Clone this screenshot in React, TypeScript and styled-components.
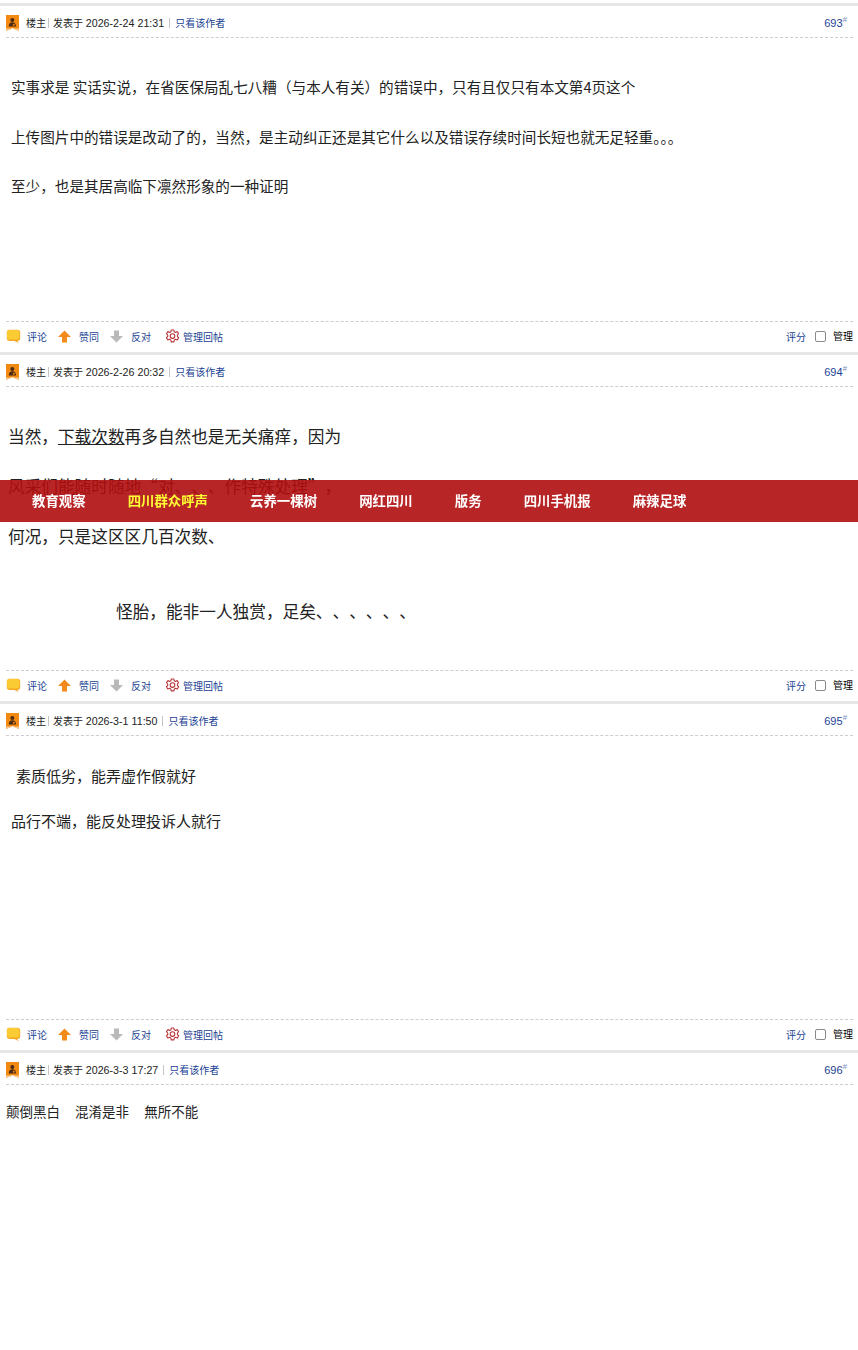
import React from "react";
import styled, { createGlobalStyle } from "styled-components";

const GlobalStyle = createGlobalStyle`
    html, body {
        margin: 0;
        padding: 0;
        background: #fff;
    }
    body {
        font-family: "Liberation Sans", "Noto Sans CJK SC", sans-serif;
        color: #222;
    }
`;

const Page = styled.div`
    padding-top: 3px;
    height: 1347px;
    overflow: hidden;
`;

const NavBar = styled.nav`
    position: fixed;
    top: 480px;
    left: 0;
    right: 0;
    height: 40px;
    padding: 0 0 2px 32px;
    display: flex;
    align-items: center;
    gap: 42.1px;
    background: rgba(176, 13, 14, 0.9);
`;

const NavItem = styled.a<{ $active?: boolean }>`
    font-size: 13.4px;
    font-weight: 700;
    color: ${(p) => (p.$active ? "#ffff33" : "#fff")};
    white-space: nowrap;
`;

const Post = styled.section`
    border-top: 3px solid #e6e6e6;
    padding: 0 5px 0 6px;
`;

const PostHead = styled.header`
    height: 29px;
    padding-top: 2px;
    display: flex;
    align-items: center;
    border-bottom: 1px dashed #cdcdcd;
    font-size: 10px;
    color: #222;
`;

const Avatar = styled.svg`
    width: 13px;
    height: 16px;
    margin: 1px 7px 0 0;
    flex: none;
`;

const Sep = styled.span<{ $left: number; $right: number }>`
    width: 1px;
    height: 10px;
    background: #c4c4c4;
    margin: 0 ${(p) => p.$right}px 0 ${(p) => p.$left}px;
`;

const Owner = styled.span`
    white-space: nowrap;
`;

const StampText = styled.span`
    white-space: nowrap;
`;

const StampDate = styled.span`
    font-size: 10.7px;
`;

const BlueLink = styled.a`
    color: #1b3f93;
    white-space: nowrap;
`;

const Floor = styled.a`
    margin-left: auto;
    margin-right: 6px;
    color: #1b3f93;
    font-size: 11px;
    white-space: nowrap;

    sup {
        font-size: 8px;
        line-height: 0;
        color: #7c8fbd;
        font-style: italic;
    }
`;

const Content = styled.div<{ $height: number; $top: number; $left: number }>`
    height: ${(p) => p.$height}px;
    box-sizing: border-box;
    padding: ${(p) => p.$top}px 0 0 ${(p) => p.$left}px;
    overflow: hidden;
`;

const Para = styled.p<{ $size: number; $line: number; $indent?: number; $gapTop?: number; $wide?: boolean }>`
    margin: ${(p) => p.$gapTop ?? 0}px 0 0 ${(p) => p.$indent ?? 0}px;
    font-family: "Noto Sans CJK SC", sans-serif;
    font-size: ${(p) => p.$size}px;
    line-height: ${(p) => p.$line}px;
    white-space: pre;
    text-spacing-trim: ${(p) => (p.$wide ? "space-all" : "normal")};
`;

const Under = styled.span`
    text-decoration: underline;
`;

const PostFoot = styled.footer`
    height: 28px;
    padding-bottom: 2px;
    display: flex;
    align-items: center;
    border-top: 1px dashed #cdcdcd;
    font-size: 10px;
`;

const Action = styled.a<{ $gap: number; $left?: number }>`
    display: flex;
    align-items: center;
    gap: ${(p) => p.$gap}px;
    margin-left: ${(p) => p.$left ?? 0}px;
    margin-right: 10px;
    color: #1b3f93;
    white-space: nowrap;
`;

const ActionIcon = styled.svg`
    width: 15px;
    height: 15px;
    flex: none;
`;

const FootRight = styled.div`
    margin-left: auto;
    display: flex;
    align-items: center;
`;

const Box = styled.span`
    border: 1px solid #8a8a8a;
    border-radius: 2px;
    margin: 0 7px 0 9px;
    width: 9px;
    height: 9px;
`;

const Manage = styled.span`
    color: #000;
    position: relative;
    top: -1px;
`;

const Rate = styled.a`
    color: #1b3f93;
`;

const BubbleIcon = () => (
    <ActionIcon viewBox="0 0 15 15">
        <path
            d="M3.800 0.800h7.400a3 3 0 0 1 3 3v5.200a3 3 0 0 1-3 3h-.2l2 2.200-4.600-2.200H3.800a3 3 0 0 1-3-3V3.800a3 3 0 0 1 3-3z"
            fill="#f5a623"
        />
        <rect x="1" y="1" width="12.500" height="9.500" rx="2.800" fill="#fbcb34" />
    </ActionIcon>
);

const ArrowIcon = ({ down }: { down?: boolean }) => (
    <ActionIcon viewBox="0 0 15 15">
        {down ? (
            <path d="M5 1.500h5v5.500h4l-6.500 6.500L1 7h4z" fill="#b9b9b9" />
        ) : (
            <path d="M7.500 1.500L14 8h-4v5.500H5V8H1z" fill="#f28a1c" />
        )}
    </ActionIcon>
);

const GearIcon = () => (
    <ActionIcon viewBox="0 0 15 15">
        <path
            d="M6.200 1h2.600l.4 1.800 1.200.6 1.700-.8 1.500 2-1.200 1.400v1.500l1.300 1.300-1.400 2.200-1.800-.7-1.200.7-.4 1.900H6.200l-.4-1.900-1.200-.7-1.800.7-1.400-2.200L2.700 7.500V6L1.500 4.600l1.500-2 1.700.8 1.200-.6z"
            fill="none"
            stroke="#b8363c"
            strokeWidth="1.100"
            strokeLinejoin="round"
        />
        <circle cx="7.500" cy="7.100" r="2.300" fill="none" stroke="#b8363c" strokeWidth="1.100" />
    </ActionIcon>
);

const OwnerBadge = () => (
    <Avatar viewBox="0 0 13 16">
        <path d="M0 0h13v16l-6.500-3L0 16z" fill="#f28a12" />
        <path d="M0 13.500h13V16l-6.500-2.200L0 16z" fill="#f8c98e" />
        <circle cx="6.300" cy="5" r="2" fill="#4a2a12" />
        <path d="M2.800 11.500c0-2.800 1.400-4.200 3.500-4.200s3.700 1.400 3.700 4.200z" fill="#4a2a12" />
        <circle cx="7.800" cy="9.700" r="1" fill="#f28a12" />
    </Avatar>
);

interface PostBlockProps {
    stamp: string;
    floor: number;
    height: number;
    top: number;
    left: number;
    footer?: boolean;
    children: React.ReactNode;
}

const PostBlock: React.FC<PostBlockProps> = ({ stamp, floor, height, top, left, footer = true, children }) => (
    <Post>
        <PostHead>
            <OwnerBadge />
            <Owner>楼主</Owner>
            <Sep $left={2} $right={4} />
            <StampText>
                发表于 <StampDate>{stamp}</StampDate>
            </StampText>
            <Sep $left={5} $right={5} />
            <BlueLink>只看该作者</BlueLink>
            <Floor>
                {floor}
                <sup>#</sup>
            </Floor>
        </PostHead>
        <Content $height={height} $top={top} $left={left}>
            {children}
        </Content>
        {footer && (
            <PostFoot>
                <Action $gap={6}>
                    <BubbleIcon />
                    评论
                </Action>
                <Action $gap={7}>
                    <ArrowIcon />
                    赞同
                </Action>
                <Action $gap={7}>
                    <ArrowIcon down />
                    反对
                </Action>
                <Action $gap={3} $left={4}>
                    <GearIcon />
                    管理回帖
                </Action>
                <FootRight>
                    <Rate>评分</Rate>
                    <Box />
                    <Manage>管理</Manage>
                </FootRight>
            </PostFoot>
        )}
    </Post>
);

const navItems = ["教育观察", "四川群众呼声", "云养一棵树", "网红四川", "版务", "四川手机报", "麻辣足球"];

export default function App() {
    return (
        <Page>
            <GlobalStyle />
            <PostBlock stamp="2026-2-24 21:31" floor={693} height={283} top={24} left={5}>
                <Para $size={14.6} $line={49.5}>实事求是 实话实说，在省医保局乱七八糟（与本人有关）的错误中，只有且仅只有本文第4页这个</Para>
                <Para $size={14.6} $line={49.5}>上传图片中的错误是改动了的，当然，是主动纠正还是其它什么以及错误存续时间长短也就无足轻重。。。</Para>
                <Para $size={14.6} $line={49.5}>至少，也是其居高临下凛然形象的一种证明</Para>
            </PostBlock>
            <PostBlock stamp="2026-2-26 20:32" floor={694} height={283} top={24} left={2}>
                <Para $size={16.67} $line={50} $wide>
                    当然，<Under>下载次数</Under>再多自然也是无关痛痒，因为
                </Para>
                <Para $size={16.67} $line={50} $wide>风采们能随时随地“对、、、作特殊处理”，</Para>
                <Para $size={16.67} $line={50} $wide>何况，只是这区区几百次数、</Para>
                <Para $size={16.67} $line={50} $indent={108} $gapTop={25} $wide>
                    怪胎，能非一人独赏，足矣、、、、、、
                </Para>
            </PostBlock>
            <PostBlock stamp="2026-3-1 11:50" floor={695} height={283} top={17} left={5}>
                <Para $size={15} $line={45} $indent={5}>素质低劣，能弄虚作假就好</Para>
                <Para $size={15} $line={45}>品行不端，能反处理投诉人就行</Para>
            </PostBlock>
            <PostBlock stamp="2026-3-3 17:27" floor={696} height={200} top={17} left={0} footer={false}>
                <Para $size={13.5} $line={18}>颠倒黑白     混淆是非     無所不能</Para>
            </PostBlock>
            <NavBar>
                {navItems.map((item) => (
                    <NavItem key={item} $active={item === "四川群众呼声"}>
                        {item}
                    </NavItem>
                ))}
            </NavBar>
        </Page>
    );
}
